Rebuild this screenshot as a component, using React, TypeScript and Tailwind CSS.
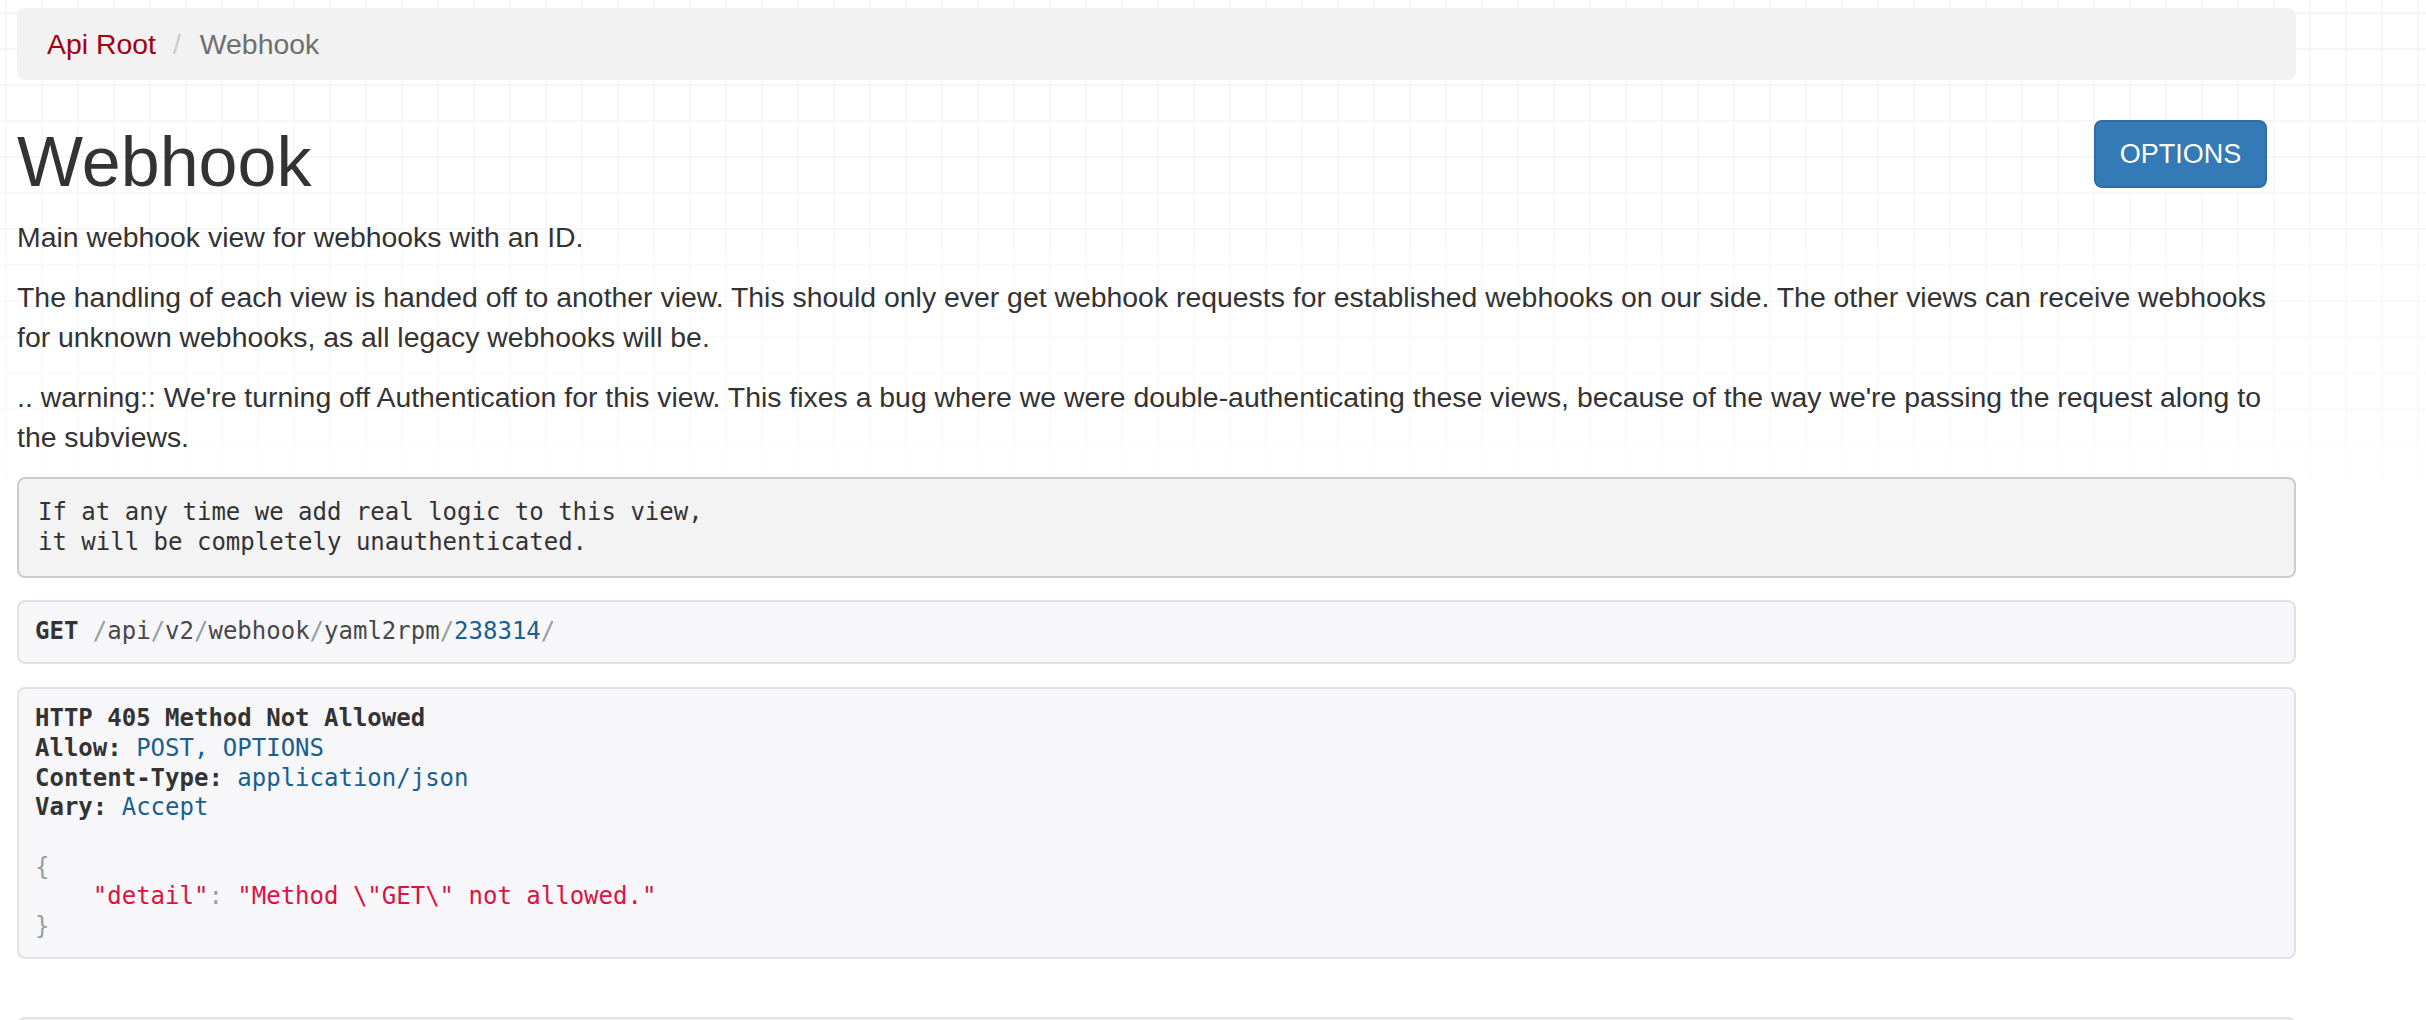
import React from "react";

const mono = "font-['DejaVu_Sans_Mono','Liberation_Mono',monospace] text-[24px] leading-[29.7px]";

function Pun({ children }: { children: React.ReactNode }) {
  return <span className="text-[#93a1a1]">{children}</span>;
}
function Pln({ children }: { children: React.ReactNode }) {
  return <span className="text-[#48484c]">{children}</span>;
}
function Lit({ children }: { children: React.ReactNode }) {
  return <span className="text-[#195f91]">{children}</span>;
}
function Str({ children }: { children: React.ReactNode }) {
  return <span className="text-[#dd1144]">{children}</span>;
}

export default function App() {
  return (
    <div className="min-h-screen w-full overflow-hidden bg-white text-[#333333] font-['Liberation_Sans',Arial,sans-serif] [background-image:linear-gradient(to_bottom,rgba(255,255,255,0)_0px,rgba(255,255,255,0.7)_478px,#ffffff_480px),linear-gradient(to_right,#f5f5f5_2px,transparent_2px),linear-gradient(to_bottom,#f5f5f5_2px,transparent_2px)] [background-size:100%_100%,36px_36px,36px_36px] [background-position:0_0,5px_12px,5px_12px]">
      <div className="ml-[17px] w-[2279px] pt-[8px]">
        <nav className="flex h-[72px] items-center rounded-[8px] bg-[#f2f2f2] px-[30px] text-[28.4px] leading-[40px]">
          <span className="text-[#a30012]">Api Root</span>
          <span className="ml-[17px] mr-[19px] text-[#cccccc]">/</span>
          <span className="text-[#6f6f6f]">Webhook</span>
        </nav>

        <div className="mt-[40px] flex items-start justify-between">
          <h1 className="mt-[2px] text-[70px] font-normal leading-[80px] text-[#333333]">Webhook</h1>
          <button className="mr-[29px] flex h-[68px] w-[173px] items-center justify-center rounded-[8px] border-2 border-[#2e6da4] bg-[#337ab7] text-[27px] text-white">
            OPTIONS
          </button>
        </div>

        <div className="mt-[15px] max-w-[2265px] text-[28.4px] leading-[40px] text-[#333333]">
          <p className="mb-[20px]">Main webhook view for webhooks with an ID.</p>
          <p className="mb-[20px]">
            The handling of each view is handed off to another view. This should only ever get webhook requests for established webhooks on our side. The other views can receive webhooks for unknown webhooks, as all legacy webhooks will be.
          </p>
          <p className="mb-[20px]">
            .. warning:: We're turning off Authentication for this view. This fixes a bug where we were double-authenticating these views, because of the way we're passing the request along to the subviews.
          </p>
        </div>

        <pre className={`mt-[1px] mb-[22px] whitespace-pre rounded-[8px] border-2 border-[#cccccc] bg-[#f3f3f3] p-[19px] text-[#333333] ${mono}`}>
{`If at any time we add real logic to this view,
it will be completely unauthenticated.`}
        </pre>

        <pre className={`mb-[23px] whitespace-pre rounded-[8px] border-2 border-[#e1e1e8] bg-[#f7f7f9] px-[16px] py-[15px] ${mono}`}>
          <b className="text-[#333333]">GET</b> <Pun>/</Pun><Pln>api</Pln><Pun>/</Pun><Pln>v2</Pln><Pun>/</Pun><Pln>webhook</Pln><Pun>/</Pun><Pln>yaml2rpm</Pln><Pun>/</Pun><Lit>238314</Lit><Pun>/</Pun>
        </pre>

        <pre className={`mb-[58px] whitespace-pre rounded-[8px] border-2 border-[#e1e1e8] bg-[#f7f7f9] px-[16px] py-[15px] text-[#333333] ${mono}`}>
          <b>HTTP 405 Method Not Allowed</b>{"\n"}
          <b>Allow:</b> <Lit>POST, OPTIONS</Lit>{"\n"}
          <b>Content-Type:</b> <Lit>application/json</Lit>{"\n"}
          <b>Vary:</b> <Lit>Accept</Lit>{"\n"}
          {"\n"}
          <Pun>{"{"}</Pun>{"\n"}
          {"    "}<Str>"detail"</Str><Pun>:</Pun> <Str>{'"Method \\"GET\\" not allowed."'}</Str>{"\n"}
          <Pun>{"}"}</Pun>
        </pre>

        <div className="h-[200px] rounded-[8px] border-2 border-[#e3e3e3] bg-[#f5f5f5]"></div>
      </div>
    </div>
  );
}
